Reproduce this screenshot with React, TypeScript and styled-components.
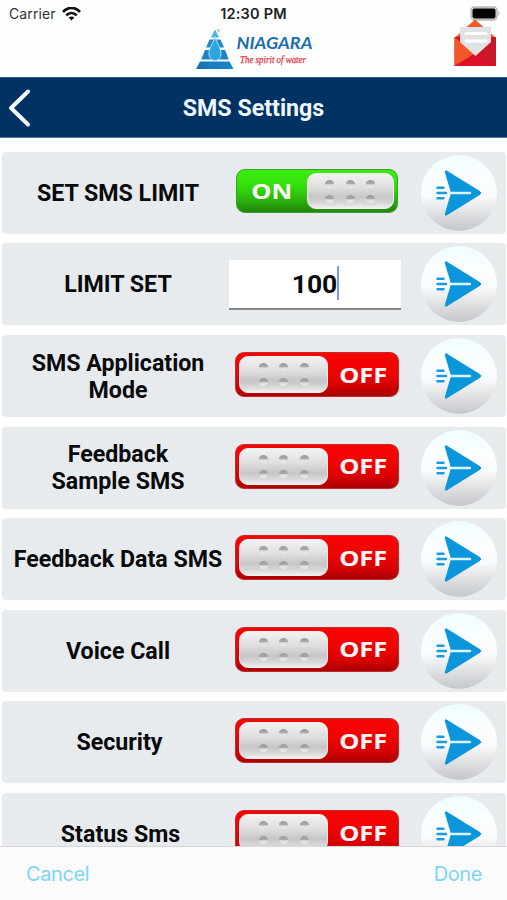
import React from "react";
import styled, { createGlobalStyle } from "styled-components";

const GlobalStyle = createGlobalStyle`
  * { box-sizing: border-box; }
  body { margin: 0; background: #fdfefe; font-family: Roboto, "Liberation Sans", sans-serif; }
`;

const Screen = styled.main`
  width: 507px;
  height: 900px;
  display: flex;
  flex-direction: column;
  overflow: hidden;
  background: #fdfefe;
`;

const TopArea = styled.header`
  height: 77px;
  flex: none;
  display: grid;
  grid-template-rows: 27px 50px;
`;

const StatusBar = styled.div`
  display: grid;
  grid-template-columns: 1fr auto 1fr;
  align-items: center;
  padding: 0 6px 0 9px;
  font-family: Inter, sans-serif;
  font-size: 14px;
  color: #333;
`;

const Carrier = styled.div`
  display: flex;
  align-items: center;
  gap: 6px;
  letter-spacing: 0.1px;
`;

const Clock = styled.div`
  font-size: 14.5px;
  font-weight: 600;
  letter-spacing: 0.2px;
  margin-right: 3px;
  color: #222;
`;

const BatterySlot = styled.div`
  display: flex;
  justify-content: flex-end;
`;

const LogoBar = styled.div`
  display: grid;
  grid-template-columns: 194px 124px 1fr;
`;

const MailSlot = styled.div`
  display: flex;
  justify-content: flex-end;
  padding-right: 10px;
  margin-top: -8px;
`;

const TitleBar = styled.nav`
  height: 61px;
  flex: none;
  display: grid;
  grid-template-columns: 40px 1fr 40px;
  align-items: center;
  background: #003263;
  border-top: 1px solid #2f5d8c;
  border-bottom: 1px solid #4f779f;
`;

const BackButton = styled.button`
  border: 0;
  padding: 0;
  background: none;
  display: flex;
`;

const Title = styled.h1`
  margin: 0;
  text-align: center;
  color: #eef6ff;
  font-size: 23.2px;
  line-height: 30px;
  font-weight: 700;
`;

const List = styled.section`
  flex: 1;
  min-height: 0;
  overflow: hidden;
  display: flex;
  flex-direction: column;
  gap: 9.5px;
  padding: 13.8px 1px 0 2px;
`;

const Row = styled.article`
  flex: none;
  height: 82.1px;
  display: grid;
  grid-template-columns: 226px 173px 1fr;
  align-items: center;
  border-radius: 4px;
  background: #e8ebee;
`;

const Label = styled.div<{ $indent: number }>`
  padding: 1px 0 0 ${(p) => p.$indent}px;
  text-align: center;
  white-space: pre-line;
  font-size: 23.2px;
  line-height: 27px;
  font-weight: 700;
  color: #080a0c;
`;

const Control = styled.div`
  display: flex;
  justify-content: center;
`;

const Switch = styled.button<{ $on: boolean }>`
  width: ${(p) => (p.$on ? 162 : 164)}px;
  height: ${(p) => (p.$on ? 44 : 45)}px;
  margin: 0 0 3px ${(p) => (p.$on ? 4 : 5)}px;
  padding: 3px;
  display: flex;
  flex-direction: ${(p) => (p.$on ? "row-reverse" : "row")};
  border: 1px solid ${(p) => (p.$on ? "#3f9a32" : "#c42a2a")};
  border-radius: 9px;
  background: ${(p) =>
    p.$on
      ? "linear-gradient(#3bf00c 0%, #33dc0c 40%, #2cb50d 70%, #208508 100%)"
      : "linear-gradient(#fa0303 0%, #f00303 45%, #d60204 75%, #a80004 100%)"};
`;

const Knob = styled.span<{ $on: boolean }>`
  width: ${(p) => (p.$on ? 87 : 89)}px;
  height: 100%;
  flex: none;
  display: grid;
  grid-template-columns: repeat(3, 9px);
  grid-template-rows: repeat(2, 8px);
  column-gap: 11.5px;
  row-gap: 7px;
  justify-content: center;
  align-content: center;
  border-radius: 9px;
  border: 1px solid #f5f1f1;
  background: linear-gradient(#f2f2f2 0%, #dedede 40%, #c6c6c6 68%, #d8d8d8 86%, #efefef 100%);
`;

const Dimple = styled.i`
  border-radius: 50%;
  background: linear-gradient(#9a9a9a 0%, #a9a9a9 45%, #dcdcdc 60%, #ececec 100%);
`;

const SwitchText = styled.span<{ $on: boolean }>`
  flex: 1;
  align-self: center;
  text-align: center;
  padding-left: ${(p) => (p.$on ? 0 : 3)}px;
  padding-right: ${(p) => (p.$on ? 3 : 0)}px;
  padding-bottom: 2px;
  font-family: "Noto Sans", sans-serif;
  font-size: 22px;
  line-height: 34px;
  font-weight: 700;
  color: #fdf5f3;
  transform: scaleX(1.16);
`;

const Field = styled.div`
  width: 172px;
  height: 50px;
  margin-top: 1px;
  padding: 0 0 1px 2px;
  display: flex;
  align-items: center;
  justify-content: center;
  background: #fff;
  border-bottom: 2px solid #85888b;
  font-size: 26.5px;
  font-weight: 700;
  color: #080a0c;
`;

const Caret = styled.span`
  width: 2px;
  height: 34px;
  background: #7f97ea;
`;

const SendButton = styled.button`
  width: 76px;
  height: 76px;
  margin-left: 20px;
  padding: 0;
  border: 0;
  border-radius: 50%;
  background: linear-gradient(#effdff 0%, #fbfeff 30%, #fafbfc 54%, #dfe1e3 76%, #c4c7ca 100%);
`;

const KeyboardBar = styled.footer`
  height: 54px;
  flex: none;
  display: flex;
  align-items: center;
  justify-content: space-between;
  padding: 0 25px 0 26px;
  border-top: 1px solid #d5d7d9;
  background: #fbfbfc;
`;

const BarAction = styled.button`
  border: 0;
  padding: 0;
  background: none;
  font-family: Inter, sans-serif;
  font-size: 20px;
  line-height: 26px;
  letter-spacing: -0.4px;
  color: #7bd5f5;
`;

const BrandSvg = styled.svg`
  overflow: visible;
`;

const WifiIcon = () => (
  <svg width="19" height="14" viewBox="0 0 19 14" fill="none" stroke="#111" strokeWidth="2.7">
    <path d="M1 5C6-.5 13-.5 18 5" />
    <path d="M4.2 8.400c3.200-3.100 7.400-3.100 10.600 0" />
    <path d="M6.600 10.600c1.600-1.400 4.200-1.400 5.800 0L9.500 13.600z" fill="#111" stroke="none" />
  </svg>
);

const BatteryIcon = () => (
  <svg width="31" height="16" viewBox="0 0 31 16">
    <rect x="1" y="1" width="26" height="13" rx="3.500" fill="#ddd" stroke="#b5b5b5" strokeWidth="1.300" />
    <rect x="2.500" y="2.500" width="23" height="10" rx="2" fill="#050505" />
    <path d="M28.500 5q2 2.500 0 5z" fill="#aaa" />
  </svg>
);

const BrandLogo = () => (
  <BrandSvg width="124" height="50" viewBox="194 27 124 50">
    <defs>
      <linearGradient id="brandBlue" x1="0" y1="0" x2="1" y2="0">
        <stop offset="0" stopColor="#1473b8" />
        <stop offset="1" stopColor="#1b86ca" />
      </linearGradient>
    </defs>
    <path d="M215 29.500l4 8h-8z" fill="#45b1e6" />
    <path d="M209.500 39.500h11l3.500 8h-18z" fill="#2188c9" />
    <path d="M205 50h20l3.800 9.500h-27.600z" fill="#1e83c5" />
    <path d="M200 61.500h29.500l4 7.500h-37.500z" fill="url(#brandBlue)" />
    <path d="M215 36.500c1.300 6.500 6 11 6 17 0 4-2.600 7-6 7s-6-3-6-7c0-6 4.700-10.500 6-17z" fill="#2ba4df" stroke="#b5e2f5" strokeWidth="1" />
    <circle cx="218.500" cy="30.500" r="1" fill="none" stroke="#777" strokeWidth=".6" />
    <text x="236.500" y="49" textLength="76" lengthAdjust="spacingAndGlyphs" fontFamily="Lato, sans-serif" fontSize="17" fontWeight="700" fontStyle="italic" fill="#1c6fb3">
      NIAGARA
    </text>
    <text x="240" y="62.500" textLength="66" lengthAdjust="spacingAndGlyphs" fontFamily="'Liberation Serif', serif" fontSize="10.500" fontWeight="400" fontStyle="italic" fill="#e5333c" stroke="#e5333c" strokeWidth=".25">
      The spirit of water
    </text>
  </BrandSvg>
);

const MailIcon = () => (
  <svg width="43" height="48" viewBox="454 19 43 48">
    <path d="M454.500 38L475 19.500 496 38z" fill="#ec5a2c" />
    <path d="M454.500 37h41.500v29h-41.500z" fill="#c9162b" />
    <path d="M454.500 37l21 18-21 11z" fill="#f4572a" />
    <path d="M454.500 66l21-13 20.500 13z" fill="#dc1028" />
    <path d="M460 27h31v15l-15.500 14L460 42z" fill="#e1e1e4" />
    <path d="M466 33.500h20M466 41h20" stroke="#fff" strokeWidth="3" strokeLinecap="round" />
  </svg>
);

const BackIcon = () => (
  <svg width="40" height="44" viewBox="0 85 40 44" fill="none" stroke="#f4faff" strokeWidth="4" strokeLinecap="round" strokeLinejoin="round">
    <path d="M28 90.500L11 107l17 16.500" />
  </svg>
);

const SendIcon = () => (
  <svg width="76" height="76" viewBox="0 0 76 76">
    <path d="M24.300 17q-.5-1.800 1.400-.9L59 36.700q2 1.300 0 2.600L25.700 59.900q-1.900.9-1.400-.9L30.500 38z" fill="#0b96dc" stroke="#0b96dc" strokeLinejoin="round" />
    <path d="M30 38h19" stroke="#def5ff" strokeWidth="2.400" strokeLinecap="round" />
    <path d="M16.500 32.700h6M16.500 38h8.500M16.500 43.300h6" stroke="#1b9cda" strokeWidth="2.400" strokeLinecap="round" />
  </svg>
);

const Toggle = ({ on }: { on: boolean }) => (
  <Switch $on={on} role="switch" aria-checked={on}>
    <Knob $on={on}>
      {[0, 1, 2, 3, 4, 5].map((n) => (
        <Dimple key={n} />
      ))}
    </Knob>
    <SwitchText $on={on}>{on ? "ON" : "OFF"}</SwitchText>
  </Switch>
);

type Setting = { label: string; on?: boolean; value?: string; indent?: number };

const settings: Setting[] = [
  { label: "SET SMS LIMIT", on: true },
  { label: "LIMIT SET", value: "100" },
  { label: "SMS Application\nMode", on: false },
  { label: "Feedback\nSample SMS", on: false },
  { label: "Feedback Data SMS", on: false },
  { label: "Voice Call", on: false },
  { label: "Security", on: false, indent: 9 },
  { label: "Status Sms", on: false, indent: 11 },
];

export default function App() {
  return (
    <Screen>
      <GlobalStyle />
      <TopArea>
        <StatusBar>
          <Carrier>
            Carrier <WifiIcon />
          </Carrier>
          <Clock>12:30 PM</Clock>
          <BatterySlot>
            <BatteryIcon />
          </BatterySlot>
        </StatusBar>
        <LogoBar>
          <span />
          <BrandLogo />
          <MailSlot>
            <MailIcon />
          </MailSlot>
        </LogoBar>
      </TopArea>
      <TitleBar>
        <BackButton aria-label="Back">
          <BackIcon />
        </BackButton>
        <Title>SMS Settings</Title>
      </TitleBar>
      <List>
        {settings.map((s) => (
          <Row key={s.label}>
            <Label $indent={s.indent ?? 6}>{s.label}</Label>
            <Control>
              {s.value ? (
                <Field>
                  {s.value}
                  <Caret />
                </Field>
              ) : (
                <Toggle on={!!s.on} />
              )}
            </Control>
            <SendButton aria-label="Send">
              <SendIcon />
            </SendButton>
          </Row>
        ))}
      </List>
      <KeyboardBar>
        <BarAction>Cancel</BarAction>
        <BarAction>Done</BarAction>
      </KeyboardBar>
    </Screen>
  );
}
